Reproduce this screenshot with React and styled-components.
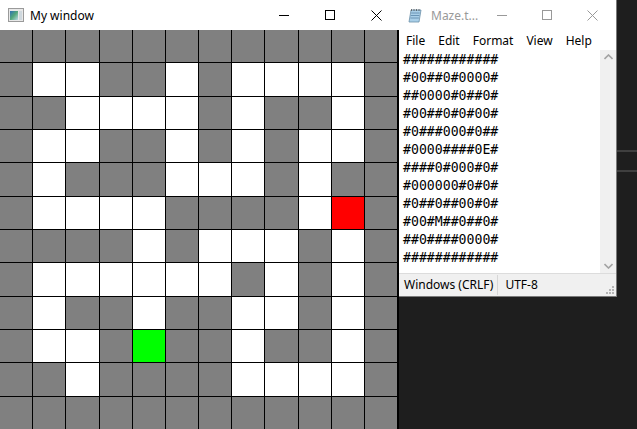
import styled, { createGlobalStyle } from 'styled-components';

const MAZE = [
  '############',
  '#00##0#0000#',
  '##0000#0##0#',
  '#00##0#0#00#',
  '#0###000#0##',
  '#0000####0E#',
  '####0#000#0#',
  '#000000#0#0#',
  '#0##0##00#0#',
  '#00#M##0##0#',
  '##0####0000#',
  '############',
];

const cellColors = {
  '#': '#808080',
  '0': '#ffffff',
  E: '#ff0000',
  M: '#00ff00',
};

const GlobalStyle = createGlobalStyle`
  html, body {
    margin: 0;
    padding: 0;
    height: 429px;
    overflow: hidden;
    background: #1e1e1e;
  }
  body {
    font-family: "Noto Sans", "Open Sans", Arial, sans-serif;
  }
`;

const Desktop = styled.div`
  display: flex;
  align-items: flex-start;
  width: 637px;
  height: 429px;
  overflow: hidden;
`;

/* ---- left window ---- */
const GameWindow = styled.div`
  width: 399px;
  height: 429px;
  display: flex;
  flex-direction: column;
  background: #fff;
  flex-shrink: 0;
`;

const TitleBar = styled.div`
  height: 30px;
  flex-shrink: 0;
  display: flex;
  align-items: center;
  background: #fff;
  padding-left: ${(p) => p.$pad || 8}px;
`;

const Title = styled.span`
  font-size: 12px;
  color: ${(p) => (p.$inactive ? '#999' : '#000')};
  margin-left: ${(p) => p.$gap || 6}px;
  flex: 1;
  white-space: nowrap;
`;

const Controls = styled.div`
  display: flex;
  height: 30px;
`;

const CtrlButton = styled.div`
  width: ${(p) => p.$w || 46}px;
  height: 30px;
  display: flex;
  align-items: center;
  justify-content: center;
  color: ${(p) => (p.$inactive ? '#999' : '#000')};
`;

const Board = styled.div`
  flex: 1;
  display: grid;
  grid-template-columns: repeat(12, 1fr);
  grid-template-rows: repeat(12, 1fr);
  gap: 1px;
  background: #000;
  width: 397px;
  border-right: 2px solid #000;
`;

const Cell = styled.div`
  background: ${(p) => cellColors[p.$kind] || '#808080'};
`;

/* ---- notepad ---- */
const Notepad = styled.div`
  width: 217px;
  height: 296px;
  flex-shrink: 0;
  display: flex;
  flex-direction: column;
  background: #fff;
  border-right: 1px solid #7a7a7a;
  border-bottom: 1px solid #7a7a7a;
`;

const MenuBar = styled.div`
  height: 20px;
  display: flex;
  align-items: center;
  gap: 13px;
  padding-left: 7px;
  font-size: 12px;
  color: #000;
`;

const EditorRow = styled.div`
  flex: 1;
  display: flex;
  border-bottom: 1px solid #dcdcdc;
  min-height: 0;
`;

const TextArea = styled.pre`
  flex: 1;
  margin: 0;
  padding: 1px 0 0 4px;
  font-family: "DejaVu Sans Mono", "Liberation Mono", monospace;
  font-size: 13.2px;
  line-height: 18px;
  color: #000;
  overflow: hidden;
`;

const ScrollBar = styled.div`
  width: 16px;
  background: #f0f0f0;
  display: flex;
  flex-direction: column;
  justify-content: space-between;
  align-items: center;
  padding: 4px 0 4px;
`;

const StatusBar = styled.div`
  height: 22px;
  display: flex;
  align-items: center;
  background: #f0f0f0;
  font-size: 12px;
  color: #000;
  position: relative;
`;

const StatusItem = styled.span`
  padding: 0 ${(p) => p.$pr || 4}px 0 ${(p) => p.$pl || 5}px;
  border-right: ${(p) => (p.$divider ? '1px solid #d7d7d7' : 'none')};
  line-height: 20px;
`;

const Grip = styled.svg`
  position: absolute;
  right: 2px;
  bottom: 2px;
`;

/* ---- backdrop strip on the right ---- */
const Backdrop = styled.div`
  flex: 1;
  height: 429px;
  padding-top: 150px;
  box-sizing: border-box;
`;

const BackdropRule = styled.div`
  height: 18px;
  border-top: 2px solid #3f3f3f;
  border-bottom: 2px solid #3f3f3f;
`;

const MinIcon = () => (
  <svg width="10" height="10" viewBox="0 0 10 10">
    <path d="M0 5.5h10" stroke="currentColor" strokeWidth="1" />
  </svg>
);

const MaxIcon = () => (
  <svg width="10" height="10" viewBox="0 0 10 10">
    <rect x="0.5" y="0.5" width="9" height="9" fill="none" stroke="currentColor" strokeWidth="1" />
  </svg>
);

const CloseIcon = () => (
  <svg width="11" height="11" viewBox="0 0 11 11">
    <path d="M0.5 0.5l10 10M10.5 0.5l-10 10" stroke="currentColor" strokeWidth="1" />
  </svg>
);

const AppIcon = () => (
  <svg width="16" height="14" viewBox="0 0 16 14">
    <defs>
      <linearGradient id="appg" x1="0" y1="0" x2="1" y2="1">
        <stop offset="0" stopColor="#2e6fb6" />
        <stop offset="0.5" stopColor="#53a77a" />
        <stop offset="1" stopColor="#b9d7e6" />
      </linearGradient>
    </defs>
    <rect x="0.5" y="0.5" width="15" height="13" fill="#e8e8e8" stroke="#9a9a9a" />
    <rect x="2" y="3" width="8" height="9" fill="url(#appg)" />
    <rect x="11" y="3" width="3" height="9" fill="#cfd8de" />
  </svg>
);

const NotepadIcon = () => (
  <svg width="15" height="15" viewBox="0 0 15 15">
    <path d="M3 2h10l-2 12H1z" fill="#a9cfe8" stroke="#6b8fa8" strokeWidth="0.8" />
    <path d="M3.2 5h8.5M2.8 7.5h8.5M2.4 10h8.5" stroke="#5a86a8" strokeWidth="0.8" />
    <path d="M3.5 1v2M6 1v2M8.5 1v2M11 1v2" stroke="#555" strokeWidth="0.8" />
  </svg>
);

const Chevron = ({ up }) => (
  <svg width="9" height="6" viewBox="0 0 9 6">
    <path
      d={up ? 'M0.5 5l4-4 4 4' : 'M0.5 1l4 4 4-4'}
      fill="none"
      stroke="#a3a3a3"
      strokeWidth="1.6"
    />
  </svg>
);

export default function App() {
  return (
    <>
      <GlobalStyle />
      <Desktop>
        <GameWindow>
          <TitleBar>
            <AppIcon />
            <Title>My window</Title>
            <Controls>
              <CtrlButton><MinIcon /></CtrlButton>
              <CtrlButton><MaxIcon /></CtrlButton>
              <CtrlButton><CloseIcon /></CtrlButton>
            </Controls>
          </TitleBar>
          <Board>
            {MAZE.flatMap((row, r) =>
              row.split('').map((ch, c) => <Cell key={`${r}-${c}`} $kind={ch} />)
            )}
          </Board>
        </GameWindow>

        <Notepad>
          <TitleBar $pad={9}>
            <NotepadIcon />
            <Title $inactive $gap={8}>Maze.t...</Title>
            <Controls>
              <CtrlButton $inactive $w={45}><MinIcon /></CtrlButton>
              <CtrlButton $inactive $w={45}><MaxIcon /></CtrlButton>
              <CtrlButton $inactive $w={47}><CloseIcon /></CtrlButton>
            </Controls>
          </TitleBar>
          <MenuBar>
            <span>File</span>
            <span>Edit</span>
            <span>Format</span>
            <span>View</span>
            <span>Help</span>
          </MenuBar>
          <EditorRow>
            <TextArea>{MAZE.join('\n')}</TextArea>
            <ScrollBar>
              <Chevron up />
              <Chevron />
            </ScrollBar>
          </EditorRow>
          <StatusBar>
            <StatusItem $divider>Windows (CRLF)</StatusItem>
            <StatusItem $pl={7}>UTF-8</StatusItem>
            <Grip width="8" height="8" viewBox="0 0 8 8">
              <g fill="#b5b5b5">
                <rect x="6" y="0" width="2" height="2" />
                <rect x="3" y="3" width="2" height="2" />
                <rect x="6" y="3" width="2" height="2" />
                <rect x="0" y="6" width="2" height="2" />
                <rect x="3" y="6" width="2" height="2" />
                <rect x="6" y="6" width="2" height="2" />
              </g>
            </Grip>
          </StatusBar>
        </Notepad>

        <Backdrop>
          <BackdropRule />
        </Backdrop>
      </Desktop>
    </>
  );
}
